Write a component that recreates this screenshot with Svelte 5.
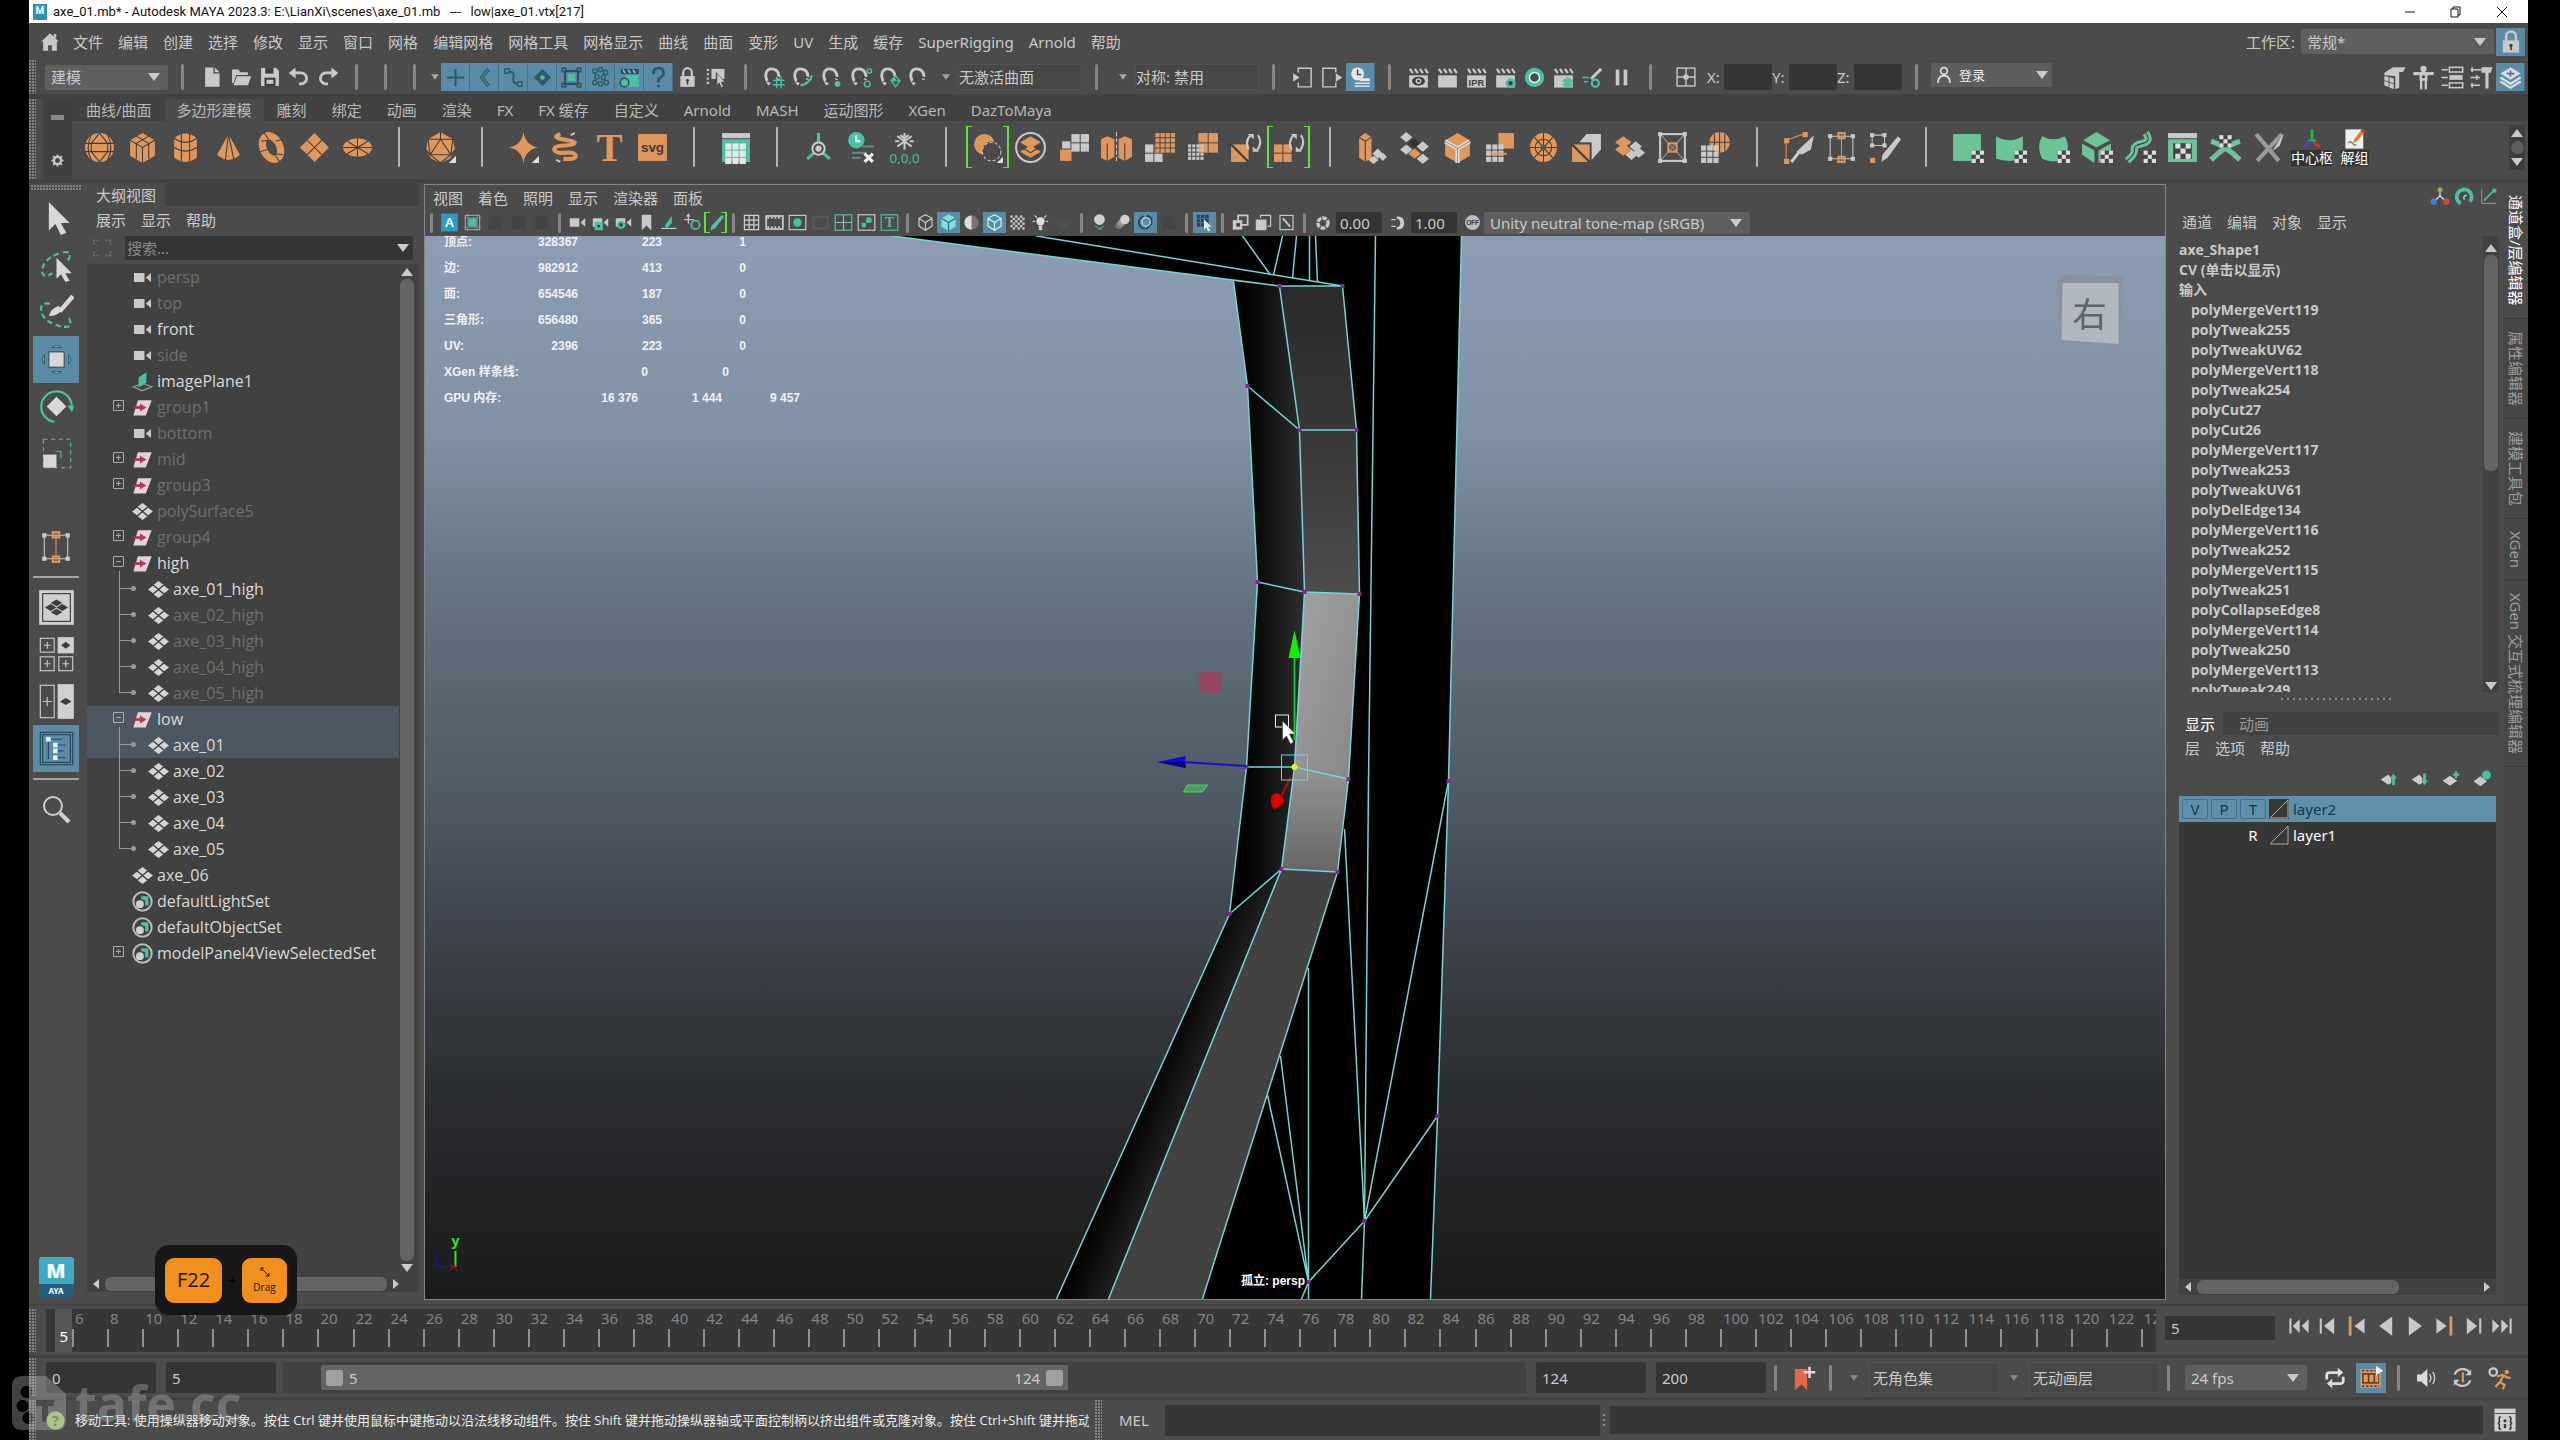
<script lang="ts">
  // Palette shared by the icon drawings
  const G = '#c9c9c9';
  const T = '#4cbfa6';
  const O = '#e0975c';
  const GR = '#6cc497';
  const D = '#3c3c3c';

  const rect = (x: number, y: number, w: number, h: number, fill: string) =>
    `<rect x="${x}" y="${y}" width="${w}" height="${h}" fill="${fill}"/>`;
  const box = (x: number, y: number, w: number, h: number, stroke: string, sw = 2) =>
    `<rect x="${x}" y="${y}" width="${w}" height="${h}" fill="none" stroke="${stroke}" stroke-width="${sw}"/>`;
  const fill = (d: string, c: string) => `<path d="${d}" fill="${c}"/>`;
  const line = (d: string, c: string, sw = 2, extra = '') =>
    `<path d="${d}" fill="none" stroke="${c}" stroke-width="${sw}" ${extra}/>`;
  const dot = (x: number, y: number, r: number, c: string) => `<circle cx="${x}" cy="${y}" r="${r}" fill="${c}"/>`;
  const ring = (x: number, y: number, r: number, c: string, sw = 2, extra = '') =>
    `<circle cx="${x}" cy="${y}" r="${r}" fill="none" stroke="${c}" stroke-width="${sw}" ${extra}/>`;
  const dia = (x: number, y: number, rx: number, ry: number, c: string) =>
    fill(`M${x} ${y - ry}l${rx} ${ry}l${-rx} ${ry}l${-rx} ${-ry}z`, c);
  const checker = (x: number, y: number, s: number) => {
    let out = rect(x, y, s * 3, s * 3, '#444');
    for (const [i, j] of [[0, 0], [2, 0], [1, 1], [0, 2], [2, 2]]) out += rect(x + i * s, y + j * s, s, s, '#ddd');
    return out;
  };
  const grid = (x: number, y: number, n: number, s: number, c: string) => {
    let out = '';
    for (let i = 0; i < n; i++) for (let j = 0; j < n; j++) out += rect(x + i * s, y + j * s, s - 1, s - 1, c);
    return out;
  };
  const clap =
    rect(3, 13, 26, 17, G) + line('M4 4l4 6M11 4l4 6M18 4l4 6M25 4l4 6', G, 3);
  const magnet = line('M9 26C0 14 4 4 12 4s12 7 9 15', G, 4) + line('M6 22l6-3M18 15l6 2', D, 2);
  const bigCube = (c: string, s = D) =>
    fill('M16 2l12 7v15l-12 7l-12-7v-15z', c) + line('M4 9l12 7l12-7M16 16v15M10 5l12 7v15M22 5l-12 7v15', s, 1);
  const cam = fill('M3 9h16v14h-16zM21 16l8-7v14z', G);
  const wireCube = line('M16 3l11 6v13l-11 7l-11-7v-13zM5 9l11 7l11-7M16 16v13', G, 2);
  const snow = line('M16 2v16M9 5l14 10M23 5l-14 10M12 4l4 3l4-3M7 10h4M25 10h-4', G, 2);
  const cycle = line('M19 18q-4-8 2-14M28 4q5 7-1 15', G, 2) + fill('M18 3h6v5zM29 20h-6v-5z', G);

  const icons: Record<string, string> = {
    home: fill('M16 2l14 13h-3v15h-8v-9h-6v9h-8v-15h-3zM22 3h4v6h-4z', G),
    file: fill('M6 2h12v9h9v19h-21z', G) + fill('M20 2l7 7h-7z', G),
    open: fill('M3 5h9l3 4h11v4h-17l-4 12h-2z', G) + fill('M10 15h21l-5 13h-21z', G),
    save: fill('M3 3h22l4 4v22h-26z', G) + rect(9, 3, 12, 8, D) + rect(8, 17, 16, 12, D) + rect(11, 20, 10, 6, G),
    undo: line('M7 10h12a8 8 0 0 1 0 16h-3', G, 4) + fill('M1 10l10-8v16z', G),
    redo: line('M25 10h-12a8 8 0 0 0 0 16h3', G, 4) + fill('M31 10l-10-8v16z', G),
    mHandle: line('M16 4v24M4 16h24', '#2f5a68', 3),
    mJoint: line('M22 4l-10 12l10 12', '#2f5a68', 5) + line('M22 4l-10 12l10 12', '#5fc0b0', 1),
    mCurve: box(4, 4, 6, 6, '#2f5a68') + line('M10 8c14 0-2 16 12 17', '#2f5a68', 3) + box(22, 22, 6, 6, '#2f5a68'),
    mSurf: dia(16, 10, 6, 6, '#2f5a68') + dia(16, 22, 6, 6, '#2f5a68') + dia(10, 16, 6, 6, '#2f5a68') + dia(22, 16, 6, 6, '#2f5a68') + dia(16, 16, 4, 4, T),
    mDeform: box(7, 7, 18, 18, '#2f4f5c', 3) + rect(11, 11, 10, 10, T) + box(3, 3, 5, 5, '#2f4f5c') + box(24, 3, 5, 5, '#2f4f5c') + box(3, 24, 5, 5, '#2f4f5c') + box(24, 24, 5, 5, '#2f4f5c'),
    mDyn: [[8, 7], [16, 5], [23, 9], [11, 15], [20, 16], [8, 23], [16, 25], [24, 23]].map(([x, y]) => ring(x, y, 3, '#2f5a68', 2)).join(''),
    mRender: rect(4, 4, 25, 7, '#2f4f5c') + line('M7 5l3 5M14 5l3 5M21 5l3 5', '#9cc', 2) + rect(10, 13, 19, 16, T) + dot(9, 23, 6, T) + ring(9, 23, 6, '#2f4f5c', 2),
    mMisc: line('M9 11q0-8 7-8t7 7q0 4-7 8v5', '#2f5a68', 4) + dot(16, 28, 2, '#2f5a68'),
    lock: line('M10 15v-6a6 6 0 0 1 12 0v6', G, 3) + rect(6, 14, 20, 15, G) + dot(16, 20, 2, D) + rect(15, 20, 2, 6, D),
    pick: line('M4 4v24', G, 3, 'stroke-dasharray="3 3"') + rect(9, 4, 18, 14, G) + fill('M15 8l14 15h-6l4 7l-4 1l-4-7l-4 4z', '#4b4b4b') + fill('M17 11l10 11h-5l3 7l-2 1l-3-7l-3 3z', G),
    magGrid: magnet + line('M14 20h16M14 26h16M19 15v16M25 15v16', T, 2),
    magCurve: magnet + line('M12 27q12-2 16-14', T, 3),
    magPoint: magnet + dot(23, 25, 4, T),
    magPlane: magnet + ring(24, 25, 4, T) + ring(27, 7, 3, T),
    magLive: magnet + line('M17 20l6-6l6 7l-6 8zM17 20l12 1', T, 2),
    magSurf: magnet,
    toIn: line('M10 9v-6h18v26h-18v-6', G, 2) + fill('M3 10l9 6l-9 6z', G),
    toOut: line('M22 9v-6h-18v26h18v-6', G, 2) + fill('M22 10l9 6l-9 6z', G),
    history: dot(12, 11, 9, '#e6e6e6') + line('M12 5v7h5', D, 2) + rect(15, 17, 14, 4, '#dfe8ec') + rect(8, 23, 21, 2, '#dfe8ec') + rect(8, 27, 21, 2, '#dfe8ec'),
    clapEye: clap + `<ellipse cx="16" cy="21" rx="9" ry="6" fill="${D}"/>` + dot(16, 21, 4, G) + dot(16, 21, 2, D),
    clap,
    clapIpa: clap + `<text x="5" y="28" font-family="Liberation Sans" font-weight="700" font-size="13" fill="${D}">IPR</text>`,
    clapGear: clap + dot(23, 24, 7, T) + dot(23, 24, 3, D),
    hyper: ring(16, 16, 10, T, 7) + ring(16, 16, 7, '#dff', 2),
    clapLayer: clap + dia(22, 21, 8, 6, T) + dia(22, 26, 8, 5, T),
    lightEd: line('M14 18L28 4', G, 4) + line('M2 16h9M4 22h6', T, 2) + ring(20, 24, 5, T, 3),
    pause: rect(8, 5, 5, 22, G) + rect(19, 5, 5, 22, G),
    grid4: box(3, 3, 26, 26, G) + line('M16 3v26M3 16h26', G, 2) + dot(16, 16, 4, G),
    modelKit: fill('M3 10l11-7h16l-3 6h-5v20l-5 2v-17l-14-1z', G) + fill('M3 14l12 3v14l-12-5z', G) + line('M3 20l12 4M9 15v14', D, 1),
    figure: dot(16, 5, 4, G) + line('M3 11h26', G, 4) + rect(11, 11, 10, 9, G) + line('M13 19v12M19 19v12', G, 3) + dot(16, 15, 2, D),
    sliders: line('M2 6h8M2 16h8M2 26h8', G, 2) + box(12, 3, 17, 6, G) + rect(12, 13, 17, 6, G) + box(12, 23, 17, 6, G),
    attrs: line('M2 6h14M2 16h12M2 26h12M4 3v6M10 13v6M4 23v6', G, 2) + fill('M16 3h14l-2 7h-3v20h-4v-20h-5z', G),
    layers: fill('M16 3l13 8l-13 8l-13-8z', '#d7dde0') + line('M3 16l13 8l13-8M3 21l13 8l13-8', '#d7dde0', 3) + line('M11 11h10M16 7v8', '#4a7088', 2),

    sphere: dot(16, 16, 14, O) + line('M2 12h28M2 20h28M8 4q-6 12 0 24M24 4q6 12 0 24M16 2l-8 10v8l8 10M16 2l8 10v8l-8 10', D, 1),
    cube: bigCube(O),
    cylinder: fill('M5 7q11-9 22 0v19q-11 8-22 0z', O) + line('M5 7q11 8 22 0M5 16q11 7 22 0M12 3v26M20 3v26', D, 1),
    cone: fill('M16 3l11 20q-11 10-22 0z', O) + line('M16 3l-3 25M16 3l5 24', D, 1),
    torus: `<ellipse cx="16" cy="16" rx="8" ry="12" fill="none" stroke="${O}" stroke-width="7" transform="rotate(-25 16 16)"/>` + line('M6 10l7-1M9 2l4 6M24 30l-4-6M27 23l-8-1M5 20l7-2M20 10l7-2', D, 1),
    plane: dia(16, 16, 14, 14, O) + line('M9 9l14 14M23 9l-14 14', D, 1),
    disc: `<ellipse cx="16" cy="16" rx="14" ry="9" fill="${O}"/>` + line('M2 16h28M16 7v18M6 10l20 12M26 10l-20 12', D, 1),
    platonic: fill('M16 1l12 7l2 10l-5 9l-9 4l-9-4l-5-9l2-10z', O) + line('M16 1v7M4 8l12 0l12 0M16 8l-10 15h20zM2 18l4 5l10 8l10-8l4-5M4 8l2 15M28 8l-2 15', D, 1) + fill('M31 24v7h-7z', '#ddd'),
    superShape: fill('M16 1q2 13 14 15q-12 2-14 15q-2-13-14-15q12-2 14-15z', O) + fill('M31 24v7h-7z', '#ddd'),
    helix: line('M10 3q-9 3 2 5t12 3q0 3-10 3t-10 4q2 4 11 3t10 3q0 4-12 3', O, 4) + line('M20 4l4-2M6 28l4 2', G, 2),
    type: `<text x="16" y="29" text-anchor="middle" font-family="Liberation Serif" font-weight="700" font-size="38" fill="${O}">T</text>`,
    svg: rect(2, 3, 28, 26, O) + `<text x="16" y="20" text-anchor="middle" font-family="Liberation Sans" font-weight="700" font-size="13" fill="${D}">svg</text>`,
    sweep: rect(3, 2, 27, 5, G) + rect(3, 8, 27, 22, T) + grid(6, 12, 3, 7, '#e8e8e8'),
    origin: line('M16 2v8M5 27l7-6M27 27l-7-6', T, 3) + ring(16, 17, 6, G, 2) + dot(16, 17, 3, G),
    delHist: dot(11, 9, 8, T) + line('M11 4v6h4', '#e0ffff', 2) + line('M17 15h11M7 21h14M7 26h8', '#5e8f88', 2) + line('M19 22l8 8M27 22l-8 8', '#eee', 3),
    freeze: snow + `<text x="16" y="31" text-anchor="middle" font-family="Noto Sans" font-size="13" fill="${T}">0,0,0</text>`,
    combine: dot(13, 13, 10, O) + dot(20, 19, 9, '#4b4b4b') + ring(20, 20, 9, G, 1, 'stroke-dasharray="3 2"') + fill('M31 25v6h-6z', '#ddd'),
    separate: ring(16, 16, 14, G, 2) + dia(16, 11, 10, 6, O) + dia(16, 20, 10, 6, O) + line('M6 15l10 6l10-6', D, 1),
    smooth: rect(3, 18, 11, 11, O) + grid(14, 3, 2, 9, G) + rect(5, 10, 8, 7, G),
    mirror: fill('M1 8l6-3l7 3v17l-7 4l-6-3z', O) + fill('M18 8l6-3l7 3v17l-7 4l-6-3z', O) + line('M7 12v17M24 12v17', D, 1) + line('M16 1v30', G, 1, 'stroke-dasharray="4 2"'),
    subdiv: grid(2, 13, 2, 9, G) + rect(11, 1, 20, 20, '#4b4b4b') + grid(12, 2, 4, 5, O),
    reduce: grid(12, 2, 2, 10, O) + grid(2, 13, 4, 4, G),
    triang: rect(2, 13, 17, 17, O) + line('M2 13l17 17', D, 2) + cycle,
    quadr: grid(2, 13, 2, 9, O) + cycle,
    extrude: fill('M4 6l6-4l6 4v20l-6 4l-6-4z', O) + line('M4 6l6 4l6-4M10 10v20', D, 1) + dia(22, 22, 5, 5, G) + dia(18, 28, 5, 4, G) + dia(27, 25, 4, 4, G),
    bridge: dia(8, 6, 6, 5, G) + dia(16, 12, 6, 5, '#333') + dia(24, 15, 6, 5, G) + dia(8, 18, 6, 5, G) + dia(16, 22, 6, 5, O) + dia(24, 27, 6, 5, G),
    bevel: fill('M16 2l12 7v15l-12 7l-12-7v-15z', O) + line('M4 10l12 7l12-7M16 17v14', '#ddd', 4) + line('M4 10l12 7l12-7M16 17v14', '#999', 1),
    append: rect(14, 2, 15, 15, O) + grid(2, 13, 3, 6, G) + line('M6 22h16', O, 2),
    fillHole: `<ellipse cx="16" cy="16" rx="13" ry="14" fill="${O}"/>` + line('M3 16h26M16 2v28M7 6l18 20M25 6l-18 20', D, 1) + ring(16, 16, 8, D, 1) + dot(16, 16, 3, '#555'),
    wedge: fill('M9 11l7-8h14v15l-9 10v-17z', G) + rect(2, 13, 17, 17, O) + line('M2 13l17 17', D, 2),
    flip: dia(10, 11, 8, 6, O) + dia(10, 18, 8, 6, O) + dia(22, 15, 6, 5, G) + dia(25, 21, 6, 5, G) + dia(18, 23, 6, 5, G),
    lattice: box(4, 3, 24, 26, G, 2) + line('M4 3l24 26M28 3l-24 26', '#999', 1) + box(12, 12, 8, 8, O) + grid(2, 1, 1, 5, G) + grid(26, 1, 1, 5, G) + grid(2, 27, 1, 5, G) + grid(26, 27, 1, 5, G),
    shrink: dot(20, 11, 10, O) + line('M10 11h20M20 1v20M15 3v16M25 3v16', D, 1) + grid(2, 14, 3, 6, G),
    multiCut: line('M4 30v-21l20-7', O, 1) + rect(2, 27, 5, 5, O) + rect(2, 7, 5, 5, O) + rect(20, 1, 5, 5, O) + fill('M31 4l-3 14l-9 5l-5-3z', G) + line('M17 20l-8 10', G, 3),
    quadDraw: line('M3 5h26M3 27h26M5 5v22M27 5v22', G, 1) + line('M16 3v26', O, 1) + box(13, 2, 6, 5, O) + box(13, 25, 6, 5, O) + rect(3, 3, 4, 4, G) + rect(25, 3, 4, 4, G) + rect(3, 25, 4, 4, G) + rect(25, 25, 4, 4, G),
    targetWeld: line('M4 4h12v10h-12z', G, 1) + rect(2, 2, 4, 4, G) + rect(14, 2, 4, 4, G) + rect(2, 12, 4, 4, G) + rect(14, 12, 4, 4, G) + rect(2, 26, 5, 5, O) + fill('M29 5l3 3l-13 18l-6 4l1-7z', G),
    uvSheet: rect(2, 3, 27, 26, GR) + checker(20, 19, 4),
    uvCyl: fill('M2 5q13 8 26 0v22q-13 4-26 0z', GR) + checker(20, 19, 4),
    uvSph: fill('M5 5q11 6 22 0q6 10 0 22q-11 5-22 0q-6-12 0-22z', GR) + checker(20, 19, 4),
    uvAuto: fill('M16 1l13 8l-13 7l-13-7z', GR) + fill('M2 12l12 7v12l-12-8zM30 12l-12 7v12l12-8z', GR) + checker(20, 19, 4),
    uvCont: line('M22 2q6 8-3 10t-8 6t-7 11', GR, 7) + line('M22 2q6 8-3 10t-8 6t-7 11', D, 1) + checker(20, 19, 4),
    uvEdit: rect(2, 2, 28, 5, G) + rect(2, 8, 28, 22, GR) + rect(7, 12, 18, 15, D) + checker(9, 12, 5),
    uv3d: line('M2 10q14 4 28 18M30 10q-14 4-28 18', GR, 5) + checker(10, 4, 4),
    uvCut: line('M4 3l22 26M29 3l-24 26', '#9a9a9a', 4) + fill('M31 2l-4 12l-8 6z', G),
    pivot: line('M16 20v-18', '#1fc04a', 4) + line('M16 18l11 10', '#c33', 4) + line('M16 18l-11 10', '#44c', 4) + line('M10 18h12', '#3a7', 2),
    notes: rect(2, 2, 26, 28, '#eee') + fill('M27 1l4 4l-12 14l-6 3l2-6z', '#d9822b') + fill('M27 1l4 4l-3 3l-4-4z', '#c33') + line('M6 22q3-4 6 0t6 2', '#777', 2),

    select: fill('M9 1l19 19h-8l5 9l-5 2l-5-10l-6 6z', '#d8d8d8'),
    lasso: line('M22 4q10-2 4 8M18 5q-16 6-15 18q3 5 9 0', T, 2, 'stroke-dasharray="5 3"') + fill('M16 9l14 14h-6l4 7l-4 1l-4-7l-4 4z', '#d8d8d8'),
    paint: line('M10 8q-9-2-8 6t10 12t14 3t1-9', T, 2, 'stroke-dasharray="5 3"') + line('M31 1l-12 14', '#d8d8d8', 4) + fill('M21 13l-3-3q-7 2-9 9q8 1 12-6z', '#d8d8d8'),
    move: rect(9, 9, 14, 14, '#d8d8d8') + box(9, 9, 14, 14, '#3c4c55', 1) + '<path d="M12 5q4-4 8 0zM12 27q4 4 8 0zM5 12q-4 4 0 8zM27 12q4 4 0 8z" fill="#6fb2bb" stroke="#2f6a80"/>',
    rotate: dia(16, 16, 9, 9, '#d8d8d8') + line('M14 30A14 14 0 1 1 30 15', T, 2) + fill('M26 15h7l-3 6z', T),
    scale: line('M4 3h25v26h-25z', T, 1, 'stroke-dasharray="4 3"') + rect(4, 17, 12, 12, '#d8d8d8') + line('M15 14h5v6', T, 1),
    panelOne: rect(1, 1, 30, 30, '#d0d0d0') + box(4, 4, 24, 24, D, 1) + dia(16, 12, 5, 3, D) + dia(16, 20, 5, 3, D) + dia(11, 16, 5, 3, D) + dia(21, 16, 5, 3, D),
    panelFour: box(2, 2, 12, 12, G, 1) + line('M8 5v6M5 8h6', G, 1) + rect(17, 1, 14, 14, '#d0d0d0') + dia(24, 8, 4, 3, D) + box(2, 18, 12, 12, G, 1) + line('M8 21v6M5 24h6', G, 1) + box(18, 18, 12, 12, G, 1) + line('M24 21v6M21 24h6', G, 1),
    panelTwo: box(2, 2, 12, 28, G, 1) + line('M8 12v8M4 16h8', G, 1) + rect(17, 1, 14, 30, '#d0d0d0') + dia(24, 16, 5, 3, D),
    outliner: box(2, 2, 28, 28, '#27465a', 1) + box(4, 4, 24, 24, '#27465a', 1) + line('M9 7v18M9 8h12M14 13h10M14 18h8M14 24h10', '#27465a', 1) + rect(7, 6, 4, 4, '#e4eef3') + rect(13, 11, 4, 4, '#e4eef3') + rect(13, 16, 4, 4, '#e4eef3') + rect(13, 22, 4, 4, '#e4eef3'),
    search: ring(13, 12, 9, '#d0d0d0', 2) + line('M20 19l9 9', '#d0d0d0', 4),

    cam,
    mesh: dia(16, 9, 8, 6, '#d4d4d4') + dia(16, 23, 8, 6, '#d4d4d4') + dia(8, 16, 8, 6, '#d4d4d4') + dia(24, 16, 8, 6, '#d4d4d4') + line('M8 9l16 14M24 9l-16 14', '#414141', 2),
    group: fill('M9 5h21l-9 23h-19z', '#e2d3d8') + line('M2 16h12', '#a03356', 4) + fill('M12 10l10 6l-10 6z', '#b03a60'),
    image: line('M2 24l14-5l14 5l-14 6z', '#8c9a98', 2) + fill('M10 10l12-8v16l-12 7z', T),
    set: ring(16, 16, 14, '#bcbcbc', 3) + dot(12, 20, 6, '#cfcfcf') + fill('M14 8h11v14h-5v-8l-6-2z', T),

    aBadge: rect(2, 1, 28, 30, '#2f9bc4') + `<text x="16" y="24" text-anchor="middle" font-family="Liberation Sans" font-weight="700" font-size="22" fill="#fff">A</text>`,
    selCam: box(4, 4, 24, 24, '#8aa') + rect(9, 9, 14, 14, T) + line('M1 8h30M1 24h30M8 1v30M24 1v30', '#8aa', 1),
    dim: rect(5, 5, 22, 22, '#444'),
    camLock: cam + rect(6, 15, 14, 14, T) + rect(11, 20, 4, 4, D),
    camGear: cam + dot(12, 20, 7, T) + dot(12, 20, 3, D),
    mark: fill('M8 3h16v26l-8-8l-8 8z', G),
    imgPlane: line('M2 26h26', G, 2) + fill('M8 22l12-17v12l-8 9z', T),
    pan2d: line('M9 4v14M2 11h16M6 6l3-4l3 4', G, 2) + ring(21, 20, 7, T, 3),
    pencil: fill('M27 3l3 4l-15 19l-8 4l2-8z', T),
    gridI: line('M3 4h26M3 12h26M3 20h26M3 28h26M4 3v26M12 3v26M20 3v26M28 3v26', '#d0d0d0', 2),
    filmGate: box(2, 5, 28, 22, G, 3) + line('M4 8h24M4 24h24', G, 3, 'stroke-dasharray="3 3"'),
    resGate: box(2, 4, 28, 24, G, 2) + dot(16, 16, 7, T),
    gateMask: box(4, 6, 24, 20, '#5a5a5a', 3),
    field: box(2, 3, 28, 26, T, 2) + line('M2 16h28M16 3v26', '#9bb', 2),
    safeAct: box(2, 3, 28, 26, G, 2) + dot(20, 12, 5, T) + rect(8, 17, 7, 7, T),
    safeTitle: box(2, 3, 28, 26, T, 2) + `<text x="16" y="24" text-anchor="middle" font-family="Liberation Serif" font-weight="700" font-size="23" fill="${T}">T</text>`,
    wireCube,
    shadeCube: fill('M16 2l12 7v14l-12 7l-12-7v-14z', '#7fe0d8') + line('M4 9l12 7l12-7M16 16v14', '#2f6a80', 2),
    halfBall: dot(16, 16, 12, '#777') + fill('M16 4a12 12 0 0 0 0 24z', '#ddd'),
    texCube: wireCube.replaceAll(G, '#bfe'),
    checkBall: [4, 12, 20].map((y) => [4, 12, 20].map((x) => rect(x, y, 4, 4, G) + rect(x + 4, y + 4, 4, 4, G)).join('')).join(''),
    bulb: dot(16, 14, 7, '#ddd') + rect(13, 21, 6, 8, G) + line('M3 14h4M25 14h4M6 4l4 4M26 4l-4 4', G, 2),
    shadow: `<ellipse cx="16" cy="20" rx="11" ry="6" fill="#475451"/>`,
    ao: dot(16, 11, 9, '#d0d0d0') + line('M8 22l8 4l8-4M13 27h8', '#4f9c8a', 2),
    motion: dot(10, 21, 6, '#777') + dot(14, 17, 6, '#999') + dot(20, 11, 8, '#d0d0d0'),
    aa: line('M13 5q-9 4-8 12t10 10M18 4l8 5v9l-9 9', '#27465a', 3) + ring(17, 15, 7, '#cde', 2),
    isolate: grid(3, 3, 3, 7, '#27465a') + fill('M15 11l13 12h-6l4 7l-4 1l-3-7l-4 4z', '#e8e8e8'),
    copyA: rect(3, 12, 16, 16, G) + box(12, 4, 16, 16, G, 3) + rect(9, 17, 6, 6, D),
    copyB: rect(3, 11, 18, 18, G) + line('M11 8v-4h17v18h-5', G, 2),
    slash: box(5, 4, 22, 24, G, 2) + line('M10 9l12 14', G, 3),
    aperture: ring(16, 16, 9, G, 6, 'stroke-dasharray="8 2"'),
    contrast: line('M4 10h8M4 22h8', G, 2) + fill('M14 4q13 0 13 12t-13 12v-5q6 0 6-7t-6-7z', G),
    off: dot(16, 16, 14, '#bdbdbd') + `<text x="16" y="20" text-anchor="middle" font-family="Liberation Sans" font-weight="700" font-size="12" fill="#333">OFF</text>`,

    axes3: line('M16 16v-8M16 16l-9 8M16 16l9 8', '#ddd', 2) + dot(16, 6, 4, '#9aa54a') + dot(6, 25, 5, '#4a7fd6') + dot(26, 25, 5, '#cc4a4a'),
    swirl: line('M9 28a12 12 0 1 1 15-3', T, 6) + line('M15 22q-3-7 4-7', '#9fe', 2),
    graph: line('M3 3v26h26', '#7c8f8b', 2) + line('M7 24l18-18', T, 3) + rect(22, 3, 7, 7, T),
    layUp: fill('M1 17l14-9l5 6v9l-5 3z', '#d0c8cc') + line('M24 27v-14', T, 5) + fill('M18 15l6-9l6 9z', T),
    layDown: fill('M1 17l14-9l5 6v9l-5 3z', '#d0c8cc') + line('M24 6v14', T, 5) + fill('M18 18l6 9l6-9z', T),
    layNew: dia(14, 19, 13, 9, '#d0c8cc') + line('M25 2v12M19 8h12', T, 4),
    layAssign: dia(13, 20, 12, 9, '#d0c8cc') + dot(24, 9, 8, T),

    start: rect(2, 5, 3, 22, G) + fill('M17 6v20l-10-10zM30 6v20l-10-10z', G),
    prevKey: rect(4, 5, 3, 22, G) + fill('M25 4v24l-15-12z', G),
    prevCurve: rect(4, 2, 4, 28, O) + fill('M27 5v22l-15-11z', G),
    playBack: fill('M25 2v28l-19-14z', G),
    play: fill('M7 2v28l19-14z', G),
    nextCurve: rect(24, 2, 4, 28, O) + fill('M5 5v22l15-11z', G),
    nextKey: rect(25, 5, 3, 22, G) + fill('M7 4v24l15-12z', G),
    end: rect(27, 5, 3, 22, G) + fill('M2 6v20l10-10zM15 6v20l10-10z', G),
    bookmark: fill('M6 5h15v26l-7-7l-8 7z', '#e5674a') + line('M24 2v14M17 9h14', '#ddd', 3),
    loop: line('M4 18v-6q0-4 4-4h14M28 14v6q0 4-4 4h-14', '#ddd', 4) + fill('M20 1l8 7l-8 7zM12 17l-8 7l8 7z', '#ddd'),
    film: rect(3, 5, 25, 23, O) + rect(5, 10, 21, 13, '#5e3b2c') + line('M5 7h21M5 26h21', '#5e3b2c', 2, 'stroke-dasharray="3 2"') + rect(7, 12, 5, 9, O) + rect(14, 12, 5, 9, O) + rect(21, 12, 4, 9, O) + fill('M22 1l9 6l-9 6z', '#eee'),
    speaker: fill('M3 11h6l9-8v26l-9-8h-6z', '#ddd') + line('M21 10q4 6 0 12M26 7q5 9 0 18', G, 2),
    cache: line('M5 12a12 12 0 0 1 22-1M27 20a12 12 0 0 1-22 1', G, 3) + rect(15, 9, 3, 14, O) + fill('M28 5v8h-8zM4 27v-8h8z', G),
    runner: ring(7, 8, 5, G, 3) + dot(25, 8, 3, O) + line('M12 14l7-2l6 3l5 1M20 14l-4 8l6 3l-2 6M15 22l-5 6', O, 3),
    script: rect(3, 2, 26, 28, '#d0d0d0') + line('M3 8h26', D, 1) + line('M11 12q-3 0-2 4t-2 4q3 0 2 4t2 3M21 12q3 0 2 4t2 4q-3 0-2 4t-2 3', D, 2) + dot(16, 17, 2, D) + line('M16 21v5', D, 3),
    gear: ring(16, 16, 9, G, 6) + line('M16 1v5M16 26v5M1 16h5M26 16h5M5 5l4 4M27 5l-4 4M5 27l4-4M27 27l-4-4', G, 4),
    filter: line('M4 11v-6h7M21 5h7v6M28 21v6h-7M11 27h-7v-6', '#6c6c6c', 3, 'stroke-dasharray="3 2"'),
    question: dot(16, 16, 14, '#a4c66a') + `<text x="16" y="24" text-anchor="middle" font-family="Noto Sans" font-weight="700" font-size="22" fill="#5f6e45">?</text>`,
    user: ring(16, 9, 6, '#ddd', 3) + line('M5 30q1-13 11-13t11 13', '#ddd', 3)
  };
  icons.reshape = icons.quadDraw;

  const menus = ['文件', '编辑', '创建', '选择', '修改', '显示', '窗口', '网格', '编辑网格', '网格工具', '网格显示', '曲线', '曲面', '变形', 'UV', '生成', '缓存', 'SuperRigging', 'Arnold', '帮助'];
  const shelfTabs = ['曲线/曲面', '多边形建模', '雕刻', '绑定', '动画', '渲染', 'FX', 'FX 缓存', '自定义', 'Arnold', 'MASH', '运动图形', 'XGen', 'DazToMaya'];

  // '|' is a separator, '*' marks an active button, '[' a bracketed one
  const statusA = '| file open save undo redo | | |'.split(' ');
  const statusB = '*mHandle *mJoint *mCurve *mSurf *mDeform *mDyn *mRender *mMisc lock pick | magGrid magCurve magPoint magPlane magLive magSurf'.split(' ');
  const statusC = '| toIn toOut *history | clapEye clap clapIpa clapGear hyper clapLayer lightEd pause |'.split(' ');
  const statusD = 'modelKit figure sliders attrs *layers'.split(' ');
  const shelf = 'sphere cube cylinder cone torus plane disc | platonic | superShape helix type svg | sweep | origin delHist freeze | [combine separate smooth mirror subdiv reduce triang [quadr | extrude bridge bevel append fillHole wedge flip lattice shrink | multiCut quadDraw targetWeld | uvSheet uvCyl uvSph uvAuto uvCont uvEdit uv3d uvCut'.split(' ');
  const viewBar = '| aBadge selCam dim dim dim | cam camLock camGear mark imgPlane pan2d [pencil | gridI filmGate resGate gateMask field safeAct safeTitle | wireCube *shadeCube halfBall *texCube checkBall bulb shadow | ao motion *aa dim | *isolate | copyA copyB slash |'.split(' ');
  const tools = ['select', 'lasso', 'paint', '*move', 'rotate', 'scale'];
  const panels = ['panelOne', 'panelFour', 'panelTwo', '*outliner'];

  type Node = { name: string; icon: string; dim?: boolean; exp?: string; child?: boolean; sel?: boolean };
  const tree: Node[] = [
    { name: 'persp', icon: 'cam', dim: true },
    { name: 'top', icon: 'cam', dim: true },
    { name: 'front', icon: 'cam' },
    { name: 'side', icon: 'cam', dim: true },
    { name: 'imagePlane1', icon: 'image' },
    { name: 'group1', icon: 'group', dim: true, exp: '+' },
    { name: 'bottom', icon: 'cam', dim: true },
    { name: 'mid', icon: 'group', dim: true, exp: '+' },
    { name: 'group3', icon: 'group', dim: true, exp: '+' },
    { name: 'polySurface5', icon: 'mesh', dim: true },
    { name: 'group4', icon: 'group', dim: true, exp: '+' },
    { name: 'high', icon: 'group', exp: '-' },
    { name: 'axe_01_high', icon: 'mesh', child: true },
    { name: 'axe_02_high', icon: 'mesh', child: true, dim: true },
    { name: 'axe_03_high', icon: 'mesh', child: true, dim: true },
    { name: 'axe_04_high', icon: 'mesh', child: true, dim: true },
    { name: 'axe_05_high', icon: 'mesh', child: true, dim: true },
    { name: 'low', icon: 'group', exp: '-', sel: true },
    { name: 'axe_01', icon: 'mesh', child: true, sel: true },
    { name: 'axe_02', icon: 'mesh', child: true },
    { name: 'axe_03', icon: 'mesh', child: true },
    { name: 'axe_04', icon: 'mesh', child: true },
    { name: 'axe_05', icon: 'mesh', child: true },
    { name: 'axe_06', icon: 'mesh' },
    { name: 'defaultLightSet', icon: 'set' },
    { name: 'defaultObjectSet', icon: 'set' },
    { name: 'modelPanel4ViewSelectedSet', icon: 'set', exp: '+' }
  ];

  const hud = [
    ['顶点:', '328367', '223', '1'],
    ['边:', '982912', '413', '0'],
    ['面:', '654546', '187', '0'],
    ['三角形:', '656480', '365', '0'],
    ['UV:', '2396', '223', '0']
  ];
  const hudWide = [
    ['XGen 样条线:', '0', '0', ''],
    ['GPU 内存:', '16 376', '1 444', '9 457']
  ];

  const inputs = ['polyMergeVert119', 'polyTweak255', 'polyTweakUV62', 'polyMergeVert118', 'polyTweak254', 'polyCut27', 'polyCut26', 'polyMergeVert117', 'polyTweak253', 'polyTweakUV61', 'polyDelEdge134', 'polyMergeVert116', 'polyTweak252', 'polyMergeVert115', 'polyTweak251', 'polyCollapseEdge8', 'polyMergeVert114', 'polyTweak250', 'polyMergeVert113', 'polyTweak249'];
  const sideTabs = ['通道盒/层编辑器', '属性编辑器', '建模工具包', 'XGen', 'XGen 交互式梳理编辑器'];
  const frames = Array.from({ length: 60 }, (_, i) => 6 + i * 2);

  // Wireframe of the axe, in window coordinates
  const edges = [
    'M893 236L1280 286H1343L1037 236',
    'M1234 281L1248 386L1258 582L1247 767L1230 914L1057 1299',
    'M1280 286L1300 430L1305 592L1295 767L1282 869L1109 1299',
    'M1343 286L1357 430L1360 594L1349 779L1338 872L1203 1299',
    'M1248 386L1300 430H1357M1258 582L1305 592L1360 594M1247 767H1295L1349 779M1230 914L1282 869L1338 872',
    'M1376 236L1369 780L1365 1221L1362 1299M1462 236L1449 781L1438 1116L1431 1299',
    'M1449 781L1365 1221L1438 1116M1365 1221L1309 1282L1302 1299M1345 829L1365 1221',
    'M1309 968V1299M1281 1056L1309 1282L1268 1095',
    'M1243 236L1271 275M1283 236L1274 275M1297 236L1293 278M1310 236V280M1316 236L1318 282'
  ];
  const verts = [[1280, 286], [1343, 286], [1248, 386], [1300, 430], [1357, 430], [1258, 582], [1305, 592], [1360, 594], [1247, 767], [1349, 779], [1230, 914], [1282, 869], [1338, 872], [1449, 781], [1438, 1116], [1365, 1221], [1309, 1282]];

  let search = $state('');
  let current = $state('5');
</script>

{#snippet icon(name: string, size: number)}
  <svg class="icon" width={size} height={size} viewBox="0 0 32 32" aria-hidden="true">{@html icons[name]}</svg>
{/snippet}

{#snippet bar(items: string[], size: number)}
  {#each items as item}
    {#if item === '|'}
      <span class="sep"></span>
    {:else}
      {@const name = item.replace(/^[*[]/, '')}
      <button class="slot" class:active={item[0] === '*'} class:bracket={item[0] === '['} aria-label={name}>
        {@render icon(name, size)}
      </button>
    {/if}
  {/each}
{/snippet}

{#snippet caret(dir: string)}
  <svg class="caret" width="12" height="8" viewBox="0 0 12 8" aria-hidden="true"><path d={dir === 'up' ? 'M0 8l6-8l6 8z' : 'M0 0h12l-6 8z'} /></svg>
{/snippet}

{#snippet hbar(cls: string)}
  <div class="hscroll">
    <svg width="6" height="10" viewBox="0 0 6 10"><path d="M6 0v10l-6-5z" /></svg>
    <div class="htrack"><div class="hthumb {cls}"></div></div>
    <svg width="6" height="10" viewBox="0 0 6 10"><path d="M0 0v10l6-5z" /></svg>
  </div>
{/snippet}

<div class="app">
  <header class="titlebar">
    <span class="logo-s">M</span>
    <span class="title">axe_01.mb* - Autodesk MAYA 2023.3: E:\LianXi\scenes\axe_01.mb &nbsp; --- &nbsp; low|axe_01.vtx[217]</span>
    <button aria-label="Minimize"><svg width="12" height="12"><path d="M1 6h10" /></svg></button>
    <button aria-label="Restore"><svg width="12" height="12"><path d="M1 3h7v8h-7zM3 3v-2h7v8h-2" /></svg></button>
    <button aria-label="Close"><svg width="12" height="12"><path d="M1 1l10 10M11 1l-10 10" /></svg></button>
  </header>

  <nav class="menubar">
    {@render icon('home', 20)}
    <div class="menus">
      {#each menus as m}<button>{m}</button>{/each}
    </div>
    <label for="workspace">工作区:</label>
    <span class="drop drop--work">
      <select id="workspace"><option>常规*</option></select>{@render caret('down')}
    </span>
    <button class="slot active" aria-label="Lock workspace">{@render icon('lock', 26)}</button>
  </nav>

  <div class="status">
    <span class="grip"></span>
    <span class="drop drop--mode">
      <select aria-label="Menu set"><option>建模</option></select>{@render caret('down')}
    </span>
    {@render bar(statusA, 22)}
    <span class="mini">{@render caret('down')}</span>
    {@render bar(statusB, 23)}
    <span class="mini mini--wide">{@render caret('down')}</span>
    <button class="flat">无激活曲面</button>
    <span class="sep"></span>
    <span class="mini mini--wide">{@render caret('down')}</span>
    <button class="flat">对称: 禁用</button>
    {@render bar(statusC, 23)}
    <span class="gridicon">{@render icon('grid4', 22)}</span>
    {#each ['X', 'Y', 'Z'] as axis}
      <label class="coord">{axis}:<input type="text" /></label>
    {/each}
    <span class="sep"></span>
    <button class="login">{@render icon('user', 18)}<span>登录</span>{@render caret('down')}</button>
    <div class="push"></div>
    {@render bar(statusD, 25)}
  </div>

  <div class="shelf">
    <span class="grip"></span>
    <div class="shelf-side"><i></i>{@render icon('gear', 13)}</div>
    <div class="shelf-main">
      <div class="shelf-tabs">
        {#each shelfTabs as tab, i}<button class:on={i === 1}>{tab}</button>{/each}
      </div>
      <div class="shelf-icons">
        {@render bar(shelf, 33)}
        <button class="slot named" aria-label="中心枢轴">{@render icon('pivot', 22)}<span>中心枢轴</span></button>
        <button class="slot named" aria-label="解组">{@render icon('notes', 22)}<span>解组</span></button>
        <div class="shelf-scroll">{@render caret('up')}<i></i>{@render caret('down')}</div>
      </div>
    </div>
  </div>

  <main class="work">
    <aside class="toolbox">
      <span class="grip-h"></span>
      {#each tools as t}
        <button class="tool" class:active={t[0] === '*'} aria-label={t}>{@render icon(t.replace('*', ''), 35)}</button>
      {/each}
      <button class="tool tool--last" aria-label="reshape">{@render icon('reshape', 34)}</button>
      <hr />
      {#each panels as p}
        <button class="tool" class:active={p[0] === '*'} aria-label={p}>{@render icon(p.replace('*', ''), 37)}</button>
      {/each}
      <hr />
      <button class="tool" aria-label="search">{@render icon('search', 32)}</button>
      <div class="maya"><b>M</b><small>AYA</small></div>
    </aside>

    <section class="outliner">
      <div class="tabstrip"><button class="on">大纲视图</button></div>
      <div class="menus"><button>展示</button><button>显示</button><button>帮助</button></div>
      <div class="search">
        {@render icon('filter', 22)}
        <div class="search-box"><input type="text" placeholder="搜索..." aria-label="搜索" bind:value={search} />{@render caret('down')}</div>
      </div>
      <div class="tree-wrap">
        <ul class="tree">
          {#each tree as n}
            <li class:sel={n.sel} class:dim={n.dim} class:child={n.child}>
              <span class="exp">
                {#if n.exp}<svg width="11" height="11" viewBox="0 0 11 11"><path d={n.exp === '+' ? 'M.5.5h10v10h-10zM3 5.500h5M5.500 3v5' : 'M.5.5h10v10h-10zM3 5.500h5'} /></svg>{/if}
              </span>
              {@render icon(n.icon, 21)}
              <span>{n.name}</span>
            </li>
          {/each}
        </ul>
        <div class="vscroll">{@render caret('up')}<div class="vtrack"><div class="vthumb"></div></div>{@render caret('down')}</div>
      </div>
      {@render hbar('hthumb--full')}
    </section>

    <section class="viewport">
      <div class="menus">
        {#each ['视图', '着色', '照明', '显示', '渲染器', '面板'] as m}<button>{m}</button>{/each}
      </div>
      <div class="viewbar">
        {@render bar(viewBar, 19)}
        <button class="slot" aria-label="exposure">{@render icon('aperture', 18)}</button>
        <input type="text" value="0.00" aria-label="Exposure" />
        <button class="slot" aria-label="contrast">{@render icon('contrast', 18)}</button>
        <input type="text" value="1.00" aria-label="Gamma" />
        <button class="slot" aria-label="view transform">{@render icon('off', 17)}</button>
        <span class="drop drop--tone">
          <select aria-label="View transform"><option>Unity neutral tone-map (sRGB)</option></select>{@render caret('down')}
        </span>
      </div>
      <div class="canvas">
        <svg class="scene" viewBox="425 236 1741 1063" preserveAspectRatio="xMidYMid slice" aria-label="persp">
          <defs>
            <linearGradient id="strip" x1="0" x2="1" y1="0" y2="0"><stop offset="0.200" stop-color="#000" /><stop offset="1" stop-color="#2e2e2e" /></linearGradient>
            <linearGradient id="low" gradientUnits="userSpaceOnUse" x1="1130" y1="1120" x2="1185" y2="1142"><stop offset="0" stop-color="#000" /><stop offset="1" stop-color="#272727" /></linearGradient>
            <linearGradient id="f1" x1="0" x2="0" y1="0" y2="1"><stop offset="0" stop-color="#292929" /><stop offset="1" stop-color="#383838" /></linearGradient>
            <linearGradient id="f2" x1="0" x2="0" y1="0" y2="1"><stop offset="0" stop-color="#373737" /><stop offset="1" stop-color="#4d4d4d" /></linearGradient>
            <linearGradient id="f3" x1="0" x2="1" y1="0" y2="1"><stop offset="0" stop-color="#a3a3a3" /><stop offset="1" stop-color="#858585" /></linearGradient>
            <linearGradient id="f4" x1="0" x2="0" y1="0" y2="1"><stop offset="0" stop-color="#949494" /><stop offset="1" stop-color="#666" /></linearGradient>
          </defs>
          <path d="M893 236L1280 286H1343L1357 430L1360 594L1349 779L1338 872L1203 1299H1431L1438 1116L1449 781L1462 236z" />
          <path fill="url(#strip)" d="M1234 281L1280 286L1300 430L1305 592L1295 767L1282 869L1230 914L1247 767L1258 582L1248 386z" />
          <path fill="url(#low)" d="M1230 914L1282 869L1109 1299H1057z" />
          <path fill="url(#f1)" d="M1280 286H1343L1357 430H1300z" />
          <path fill="url(#f2)" d="M1300 430H1357L1360 594L1305 592z" />
          <path fill="url(#f3)" d="M1305 592L1360 594L1349 779L1295 767z" />
          <path fill="url(#f4)" d="M1295 767L1349 779L1338 872L1282 869z" />
          <path fill="#424242" d="M1282 869L1338 872L1203 1299H1109z" />
          {#each edges as d}<path class="edge" {d} />{/each}
          {#each verts as [x, y]}<rect x={x - 2} y={y - 2} width="4" height="4" fill="#8b1f96" />{/each}

          <!-- move manipulator -->
          <path d="M1295 740V655" stroke="#10c810" stroke-width="2" />
          <path d="M1295 630L1301 658H1289z" fill="#0cf00c" />
          <path d="M1247 766L1184 762" stroke="#1414c8" stroke-width="2" />
          <path d="M1158 762L1186 756V768z" fill="#0a0ae6" />
          <path d="M1158 762L1186 762V768z" fill="#050580" />
          <path d="M1291 777L1282 796" stroke="#b01010" stroke-width="2" />
          <path d="M1272 796Q1277 791 1281 795L1285 800Q1284 806 1275 809Q1270 806 1272 796z" fill="#dc0000" />
          <rect x="1200" y="673" width="22" height="19" fill="#a0405e" fill-opacity="0.800" stroke="#c0304e" />
          <path d="M1184 792L1188 785H1208L1203 792z" fill="#4f9a62" stroke="#3fe04f" />
          <rect x="1282" y="755" width="26" height="25" fill="none" stroke="#6ad4dc" />
          <circle cx="1295" cy="767" r="3" fill="#f0f020" />
          <rect x="1276" y="715" width="13" height="12" fill="none" stroke="#eee" />
          <path d="M1283 721V740L1287 736L1291 744L1294 742L1290 734H1296z" fill="#fff" stroke="#333" stroke-width="0.500" />

          <!-- view cube -->
          <path d="M2057 281L2064 274L2123 277L2120 346L2060 342z" fill="#8a929c" />
          <path d="M2063 283H2119V344L2062 340z" fill="#b0b7be" />
          <text class="cube-text" x="2090" y="327">右</text>

          <!-- world axis -->
          <path d="M456 1251V1267" stroke="#2ee82e" stroke-width="2" />
          <path d="M454 1267H437V1256" stroke="#1a1a9a" fill="none" />
          <path d="M450 1264L458 1271M450 1271L458 1264" stroke="#b01828" />
          <text x="452" y="1246" class="axis-text">y</text>
        </svg>
        <div class="hud">
          {#each hud as row}
            <div class="hud-row">{#each row as c}<span>{c}</span>{/each}</div>
          {/each}
          {#each hudWide as row}
            <div class="hud-row hud-row--wide">{#each row as c}<span>{c}</span>{/each}</div>
          {/each}
        </div>
        <div class="cam-name">孤立: persp</div>
      </div>
    </section>

    <section class="channels">
      <div class="chan-tools">{@render icon('axes3', 20)}{@render icon('swirl', 20)}{@render icon('graph', 18)}</div>
      <div class="menus"><button>通道</button><button>编辑</button><button>对象</button><button>显示</button></div>
      <div class="chan-body">
        <div class="chan-list">
          <p>axe_Shape1</p>
          <p>CV (单击以显示)</p>
          <p>输入</p>
          {#each inputs as n}<p class="in">{n}</p>{/each}
        </div>
        <div class="vscroll vscroll--chan">{@render caret('up')}<div class="vtrack"><div class="vthumb vthumb--short"></div></div>{@render caret('down')}</div>
      </div>
      <div class="dots"></div>
      <div class="layer-panel">
        <div class="tabstrip"><button class="on bright">显示</button><button>动画</button></div>
        <div class="menus"><button>层</button><button>选项</button><button>帮助</button></div>
        <div class="layer-tools">
          {#each ['layUp', 'layDown', 'layNew', 'layAssign'] as n}<button aria-label={n}>{@render icon(n, 18)}</button>{/each}
        </div>
        <div class="layers">
          <div class="layer on"><b>V</b><b>P</b><b>T</b>
            <svg width="20" height="20"><rect width="20" height="20" fill="#383838" /><path d="M1 19L19 1V19z" fill="none" stroke="#aaa" /></svg><span>layer2</span></div>
          <div class="layer"><b></b><b></b><b>R</b>
            <svg width="20" height="20"><path d="M1 19L19 1V19z" fill="none" stroke="#aaa" /></svg><span>layer1</span></div>
          <div class="push"></div>
          {@render hbar('')}
        </div>
      </div>
    </section>

    <nav class="sidetabs">
      {#each sideTabs as tab, i}<button class:on={i === 0}>{tab}</button>{/each}
    </nav>
  </main>

  <div class="timeline">
    <span class="grip"></span>
    <div class="ruler">
      <div class="now">5</div>
      <div class="ticks">
        {#each frames as f}<div class="tick">{f}</div>{/each}
      </div>
    </div>
    <input class="frame" type="text" bind:value={current} aria-label="Current frame" />
    <div class="play">
      {#each ['start', 'prevKey', 'prevCurve', 'playBack', 'play', 'nextCurve', 'nextKey', 'end'] as n}
        <button aria-label={n}>{@render icon(n, 22)}</button>
      {/each}
    </div>
  </div>

  <div class="range">
    <span class="grip"></span>
    <input type="text" value="0" aria-label="Animation start" />
    <input type="text" value="5" aria-label="Playback start" />
    <div class="slider">
      <div class="slider-bar"><i></i><span>5</span><span class="end">124</span><i></i></div>
    </div>
    <input type="text" value="124" aria-label="Playback end" />
    <input class="last" type="text" value="200" aria-label="Animation end" />
    <span class="sep sep--thin"></span>
    <button class="slot" aria-label="bookmark">{@render icon('bookmark', 26)}</button>
    <span class="sep sep--thin"></span>
    <span class="mini mini--dim">{@render caret('down')}</span>
    <button class="flat">无角色集</button>
    <span class="mini mini--dim">{@render caret('down')}</span>
    <button class="flat">无动画层</button>
    <span class="sep sep--thin"></span>
    <span class="drop drop--fps">
      <select aria-label="Frame rate"><option>24 fps</option></select>{@render caret('down')}
    </span>
    <button class="slot" aria-label="loop">{@render icon('loop', 22)}</button>
    <button class="slot active" aria-label="cached playback">{@render icon('film', 26)}</button>
    <span class="sep sep--thin"></span>
    <button class="slot" aria-label="speaker">{@render icon('speaker', 22)}</button>
    <button class="slot" aria-label="auto key">{@render icon('cache', 23)}</button>
    <button class="slot" aria-label="preferences">{@render icon('runner', 24)}</button>
  </div>

  <footer class="command">
    <span class="grip"></span>
    {@render icon('question', 21)}
    <div class="help">移动工具: 使用操纵器移动对象。按住 Ctrl 键并使用鼠标中键拖动以沿法线移动组件。按住 Shift 键并拖动操纵器轴或平面控制柄以挤出组件或克隆对象。按住 Ctrl+Shift 键并拖动操纵器</div>
    <span class="grip"></span>
    <label for="mel">MEL</label>
    <input id="mel" type="text" />
    <span class="split"></span>
    <output></output>
    <button class="slot" aria-label="Script editor">{@render icon('script', 26)}</button>
  </footer>

  <div class="keys"><kbd>F22</kbd><span>+</span><kbd class="small"><svg width="10" height="10"><path d="M1 1l8 8M1 4V1h3M9 6v3h-3" /></svg>Drag</kbd></div>

  <div class="watermark">
    <svg width="54" height="54" viewBox="0 0 54 54"><path fill-rule="evenodd" d="M10 0H34L54 18V44Q54 54 44 54H10Q0 54 0 44V10Q0 0 10 0zM14 10a6 6 0 1 0 1 0zM10 24a6 6 0 1 0 1 0zM16 36a6 6 0 1 0 1 0zM24 24H42V30H36V46H30V30H24z" /></svg>
    <span>tafe.cc</span>
  </div>
</div>

<style>
  :global(body) {
    background: #000;
  }

  .app {
    position: relative;
    box-sizing: border-box;
    display: flex;
    flex-direction: column;
    height: 100vh;
    margin: 0 32px 0 29px;
    background: #4b4b4b;
    color: #cacaca;
    font-family: 'Noto Sans', 'Noto Sans CJK SC', sans-serif;
    font-size: 15px;
    line-height: 20px;
    overflow: hidden;
  }

  button,
  input,
  select {
    box-sizing: border-box;
    margin: 0;
    padding: 0;
    border: 0;
    border-radius: 0;
    background: none;
    color: inherit;
    font: inherit;
    white-space: nowrap;
  }

  input {
    background: #343434;
    padding-left: 6px;
    border-radius: 2px;
    min-width: 0;
  }

  .icon {
    display: block;
    flex: none;
  }

  .caret {
    fill: #cacaca;
    flex: none;
  }

  .push {
    flex: 1;
  }

  .menus {
    display: flex;
    gap: 15px;
    flex: none;
  }

  /* Grips and separators */
  .grip {
    align-self: stretch;
    flex: none;
    width: 7px;
    margin-right: 9px;
    background: radial-gradient(circle at 1px 1px, #858585 1px, transparent 1px) 0 0 / 3px 3px;
  }

  .sep {
    display: flex;
    justify-content: center;
    align-items: center;
    flex: none;
    width: 29px;
    height: 26px;
  }

  .sep::before {
    content: '';
    width: 3px;
    height: 100%;
    border-radius: 2px;
    background: #858585;
  }

  .slot {
    display: flex;
    align-items: center;
    justify-content: center;
    flex: none;
    width: 29px;
    height: 28px;
  }

  .active {
    background: #5b8ba7;
  }

  .status .active {
    border-right: 1px solid #4a7088;
  }

  /* Square brackets round the button: two sides and four short ends */
  .bracket {
    border: solid #5fe03c;
    border-width: 0 2px;
    background:
      linear-gradient(#5fe03c, #5fe03c) 0 0 / 4px 1px no-repeat,
      linear-gradient(#5fe03c, #5fe03c) 100% 0 / 4px 1px no-repeat,
      linear-gradient(#5fe03c, #5fe03c) 0 100% / 4px 1px no-repeat,
      linear-gradient(#5fe03c, #5fe03c) 100% 100% / 4px 1px no-repeat;
  }

  /* Drop-downs */
  .drop {
    display: inline-flex;
    align-items: center;
    flex: none;
    box-sizing: border-box;
    padding-right: 8px;
    background: #5f5f5f;
    border-radius: 2px;
  }

  .drop select {
    appearance: none;
    flex: 1;
    height: 25px;
    padding-left: 6px;
  }

  .drop--work {
    width: 193px;
    margin: 0 2px 0 6px;
  }

  .drop--mode {
    width: 123px;
  }

  .drop--tone {
    width: 266px;
  }

  .drop--tone select {
    height: 22px;
    padding-left: 6px;
  }

  .drop--fps {
    width: 122px;
    margin: 0 9px 0 8px;
  }

  .flat {
    width: 124px;
    height: 26px;
    text-align: left;
    border: 1px solid #525252;
    background: #474747;
    flex: none;
  }

  .mini {
    display: flex;
    justify-content: center;
    width: 12px;
    flex: none;
    opacity: 0.7;
  }

  .mini .caret {
    width: 8px;
  }

  .mini--wide {
    width: 24px;
  }

  .mini--dim {
    width: 30px;
    opacity: 0.5;
  }

  /* Title bar */
  .titlebar {
    display: flex;
    align-items: center;
    flex: none;
    height: 23px;
    padding-right: 3px;
    background: #fff;
    color: #111;
    font-family: Roboto, sans-serif;
    font-size: 13px;
  }

  .titlebar svg {
    display: block;
    margin: 0 auto;
    fill: none;
    stroke: #111;
  }

  .titlebar button {
    width: 46px;
  }

  .logo-s {
    width: 14px;
    height: 16px;
    margin: 0 6px 0 4px;
    background: #2c93b0;
    color: #fff;
    font-size: 10px;
    line-height: 14px;
    font-weight: 700;
    text-align: center;
  }

  .title {
    flex: 1;
  }

  /* Menu bar */
  .menubar {
    display: flex;
    align-items: center;
    flex: none;
    height: 37px;
    padding: 0 3px 0 11px;
  }

  .menubar .menus {
    flex: 1;
    margin-left: 13px;
  }

  /* Status line */
  .status {
    display: flex;
    align-items: center;
    flex: none;
    height: 34px;
    padding-right: 3px;
    border-bottom: 5px solid #424242;
  }

  .gridicon {
    width: 42px;
    display: flex;
    justify-content: center;
  }

  .coord {
    display: flex;
    align-items: center;
    justify-content: space-between;
    width: 65px;
  }

  .coord input {
    width: 48px;
    height: 26px;
  }

  .login {
    display: flex;
    align-items: center;
    gap: 6px;
    width: 121px;
    height: 24px;
    margin-bottom: 5px;
    padding: 0 4px;
    border-radius: 2px;
    background: #5d5d5d;
    color: #eee;
    font-size: 13px;
  }

  .login span {
    flex: 1;
    text-align: left;
  }

  /* Shelf */
  .shelf {
    display: flex;
    flex: none;
    height: 80px;
    border-bottom: 4px solid #424242;
  }

  .shelf .grip {
    margin-right: 7px;
  }

  .shelf-side {
    display: flex;
    flex-direction: column;
    align-items: center;
    gap: 34px;
    flex: none;
    width: 29px;
    padding-top: 16px;
    box-sizing: border-box;
    background: #404040;
  }

  .shelf-side i {
    width: 13px;
    height: 5px;
    background: #8a8a8a;
  }

  .shelf-main {
    flex: 1;
    min-width: 0;
  }

  .shelf-tabs {
    display: flex;
    gap: 1px;
    height: 22px;
    padding-left: 2px;
    background: #414141;
  }

  .shelf-tabs button {
    padding: 0 12px;
    color: #b9b9b9;
  }

  .shelf-tabs .on {
    background: #4b4b4b;
  }

  .shelf-icons {
    display: flex;
    align-items: center;
    height: 52px;
    padding: 0 3px 0 6px;
  }

  .shelf-icons .slot {
    width: 43px;
    height: 42px;
  }

  .shelf-icons .sep {
    width: 40px;
    height: 40px;
  }

  .shelf-icons .sep::before {
    width: 2px;
    background: #b5b5b5;
  }

  .shelf-icons .named {
    flex-direction: column;
    color: #fff;
    font-size: 14px;
    line-height: 16px;
  }

  .named span {
    max-width: 41px;
    background: #333;
    overflow: hidden;
  }

  .shelf-scroll {
    display: flex;
    flex-direction: column;
    align-items: center;
    gap: 4px;
    width: 16px;
    padding: 4px 0;
    margin-left: auto;
    background: #3e3e3e;
  }

  .shelf-scroll i {
    width: 13px;
    height: 13px;
    border-radius: 50%;
    background: #5e5e5e;
  }

  /* Working area */
  .work {
    display: flex;
    flex: 1;
    min-height: 0;
  }

  .toolbox {
    display: flex;
    flex-direction: column;
    align-items: center;
    flex: none;
    width: 54px;
    margin-right: 4px;
  }

  .grip-h {
    width: 50px;
    height: 6px;
    margin: 2px 0 4px;
    background: radial-gradient(circle at 1px 1px, #858585 1px, transparent 1px) 0 0 / 3px 3px;
  }

  .tool {
    display: flex;
    align-items: center;
    justify-content: center;
    flex: none;
    width: 46px;
    height: 47px;
  }

  .tool--last {
    margin-top: 46px;
  }

  .toolbox hr {
    width: 46px;
    height: 2px;
    margin: 6px 0;
    border: 0;
    background: #a5a5a5;
  }

  .maya {
    display: flex;
    flex-direction: column;
    width: 35px;
    height: 40px;
    margin: auto 0 7px;
    background: linear-gradient(#3fa9c4 68%, #24607c 68%);
    color: #fff;
    border-radius: 3px;
    text-align: center;
    font-weight: 700;
  }

  .maya b {
    font-size: 20px;
    line-height: 28px;
  }

  .maya small {
    font-size: 8px;
    line-height: 11px;
  }

  .tabstrip {
    display: flex;
    flex: none;
    height: 23px;
    background: #414141;
  }

  .tabstrip button {
    padding: 0 8px;
    color: #9a9a9a;
  }

  .tabstrip .on {
    background: #4b4b4b;
    color: #cacaca;
  }

  .tabstrip .bright {
    margin-right: 8px;
    color: #fff;
  }

  .outliner {
    display: flex;
    flex-direction: column;
    flex: none;
    width: 332px;
    margin-right: 5px;
    padding-bottom: 12px;
  }

  .outliner .tabstrip button {
    padding: 0 9px;
  }

  .outliner .menus {
    padding: 4px 9px 6px;
  }

  .search {
    display: flex;
    align-items: center;
    gap: 12px;
    flex: none;
    height: 24px;
    padding: 0 6px 4px 4px;
  }

  .search-box {
    display: flex;
    align-items: center;
    flex: 1;
    padding-right: 4px;
    background: #343434;
    height: 24px;
  }

  .search-box input {
    flex: 1;
    padding-left: 2px;
  }

  .search-box input::placeholder {
    color: #8a8a8a;
  }

  .tree-wrap {
    display: flex;
    flex: 1;
    min-height: 0;
    background: #414141;
  }

  .tree {
    flex: 1;
    margin: 0;
    padding: 0;
    list-style: none;
    font-family: 'Open Sans', sans-serif;
    font-size: 16px;
    color: #dadada;
  }

  .tree li {
    position: relative;
    display: flex;
    align-items: center;
    gap: 4px;
    height: 26px;
    padding-left: 26px;
  }

  .tree .exp {
    width: 15px;
    height: 15px;
  }

  .exp svg {
    display: block;
    fill: none;
    stroke: #aaa;
  }

  .tree .dim {
    color: #6f6f6f;
  }

  .tree .sel {
    background: #4c5763;
  }

  .tree .child {
    padding-left: 42px;
  }

  /* Branch lines; the first child's stops under the parent's toggle */
  .child::before {
    content: '';
    position: absolute;
    left: 32px;
    top: -5px;
    width: 14px;
    height: 17px;
    border: solid #999;
    border-width: 0 0 1px 1px;
  }

  .child::after {
    content: '';
    position: absolute;
    left: 44px;
    top: 10px;
    width: 5px;
    height: 5px;
    border-radius: 50%;
    background: #999;
  }

  .child + .child::before {
    top: -14px;
    height: 26px;
  }

  .vscroll {
    display: flex;
    flex-direction: column;
    align-items: center;
    flex: none;
    width: 14px;
    padding: 4px 5px 4px 1px;
  }

  .vtrack {
    flex: 1;
    width: 14px;
    padding: 3px 0;
  }

  .vthumb {
    height: 100%;
    border-radius: 6px;
    background: #646464;
  }

  .vthumb--short {
    height: 51%;
  }

  .hscroll {
    display: flex;
    align-items: center;
    gap: 6px;
    flex: none;
    height: 16px;
    padding: 0 20px 0 6px;
    background: #414141;
    fill: #cacaca;
  }

  .htrack {
    flex: 1;
  }

  .hthumb {
    width: 72%;
    height: 14px;
    border-radius: 6px;
    background: #646464;
  }

  .hthumb--full {
    width: 100%;
  }

  /* Viewport */
  .viewport {
    display: flex;
    flex-direction: column;
    flex: 1;
    min-width: 0;
    margin: 1px 0 4px;
    border: 1px solid #858585;
  }

  .viewport > .menus {
    padding: 3px 8px 3px;
  }

  .viewbar {
    display: flex;
    align-items: center;
    flex: none;
    height: 23px;
    padding-bottom: 2px;
  }

  .viewbar .slot {
    width: 23px;
    height: 21px;
  }

  .viewbar .sep {
    width: 13px;
    height: 20px;
  }

  .viewbar input {
    width: 46px;
    height: 21px;
    padding-left: 4px;
    margin: 0 4px 0 2px;
  }

  .canvas {
    position: relative;
    flex: 1;
    min-height: 0;
    overflow: hidden;
    background: linear-gradient(#8d9db5, #8092a3 18%, #697886 31%, #586571 44%, #505a66 53%, #434954 62%, #363a40 72%, #292b2e 82%, #1a1b1c);
  }

  .scene {
    display: block;
    position: absolute;
    width: 100%;
    height: 100%;
  }

  .edge {
    fill: none;
    stroke: #74d4d8;
    stroke-width: 1.5;
  }

  .cube-text {
    fill: #5c636b;
    font-size: 34px;
    text-anchor: middle;
  }

  .axis-text {
    fill: #2ee82e;
    font-size: 14px;
    font-weight: 700;
  }

  .hud {
    position: absolute;
    left: 19px;
    top: -4px;
    color: #f2f2f2;
    font-family: 'Liberation Sans', 'Noto Sans CJK SC', sans-serif;
    font-size: 12px;
    font-weight: 700;
  }

  .hud-row {
    display: grid;
    grid-template-columns: 70px 64px 84px 84px;
    height: 26px;
  }

  .hud-row--wide {
    grid-template-columns: 110px 94px 81px 82px;
  }

  .hud-row--wide:last-child {
    grid-template-columns: 100px 94px 84px 78px;
  }

  .hud-row span:not(:first-child) {
    text-align: right;
  }

  .cam-name {
    position: absolute;
    left: 0;
    right: 44px;
    bottom: 8px;
    text-align: center;
    color: #fff;
    font-family: 'Liberation Sans', 'Noto Sans CJK SC', sans-serif;
    font-size: 12px;
    font-weight: 700;
  }

  /* Channel box */
  .channels {
    display: flex;
    flex-direction: column;
    flex: none;
    width: 325px;
    padding: 0 5px 9px 8px;
  }

  .chan-tools {
    display: flex;
    justify-content: flex-end;
    align-items: center;
    gap: 5px;
    flex: none;
    height: 26px;
    padding-right: 1px;
  }

  .channels .menus {
    padding: 3px 8px 4px;
  }

  .chan-body {
    display: flex;
    flex: none;
    height: 456px;
    overflow: hidden;
  }

  .chan-list {
    flex: 1;
    padding: 4px 5px;
    font-family: 'Open Sans', 'Noto Sans CJK SC', sans-serif;
    font-size: 14px;
    font-weight: 700;
    overflow: hidden;
  }

  .chan-list p {
    margin: 0;
  }

  .chan-list .in {
    padding-left: 12px;
  }

  .vscroll--chan {
    background: #414141;
    width: 14px;
    padding: 8px 1px 2px;
  }

  .dots {
    align-self: center;
    flex: none;
    width: 112px;
    height: 3px;
    margin: 6px 0 11px;
    background: radial-gradient(circle at 1px 1px, #8a8a8a 1px, transparent 1px) 0 0 / 6px 3px;
  }

  .layer-panel {
    display: flex;
    flex-direction: column;
    flex: 1;
    margin-left: 3px;
  }

  .layer-tools {
    display: flex;
    justify-content: flex-end;
    gap: 13px;
    flex: none;
    height: 34px;
    padding-right: 8px;
  }

  .layers {
    display: flex;
    flex-direction: column;
    flex: 1;
    margin: 0 3px 0 2px;
    background: #373737;
  }

  .layers .hscroll {
    padding: 0 6px;
  }

  .layer {
    display: flex;
    align-items: center;
    height: 26px;
    padding-left: 3px;
    color: #fff;
  }

  .layer b {
    box-sizing: border-box;
    width: 26px;
    height: 20px;
    margin-right: 3px;
    border-radius: 2px;
    font-weight: 400;
    line-height: 20px;
    text-align: center;
  }

  .layer span {
    margin-left: 4px;
  }

  .layer.on {
    background: #5e90ab;
    color: #12384e;
  }

  .layer.on b {
    border: 1px solid #41718c;
    line-height: 18px;
  }

  .sidetabs {
    display: flex;
    flex-direction: column;
    flex: none;
    width: 24px;
    background: #464646;
  }

  .sidetabs button {
    padding: 12px 0;
    border-bottom: 1px solid #3c3c3c;
    writing-mode: vertical-rl;
    text-orientation: sideways;
    text-align: left;
    line-height: 24px;
    color: #9c9c9c;
  }

  .sidetabs .on {
    background: #4b4b4b;
    color: #fff;
  }

  /* Time slider */
  .timeline {
    display: flex;
    flex: none;
    height: 43px;
    padding: 3px 12px 3px 0;
    border-top: 2px solid #424242;
  }

  .timeline .grip {
    margin-right: 10px;
  }

  .ruler {
    display: flex;
    flex: 1;
    min-width: 0;
    padding-left: 9px;
    background: #363636;
    overflow: hidden;
  }

  .now {
    display: flex;
    align-items: flex-end;
    justify-content: flex-end;
    flex: none;
    box-sizing: border-box;
    width: 17px;
    padding: 0 4px 6px 0;
    background: #555;
    color: #fff;
  }

  .ticks {
    display: flex;
    flex: 1;
    margin-right: -20px;
  }

  /* Labels run past their cell, so the cell must not grow with them */
  .tick {
    box-sizing: border-box;
    flex: 1 1 0;
    width: 0;
    min-width: 0;
    padding-left: 3px;
    color: #848484;
    line-height: 18px;
    background: linear-gradient(#8f8f8f, #8f8f8f) 0 20px / 2px 18px no-repeat;
  }

  .frame {
    flex: none;
    width: 110px;
    height: 24px;
    margin: 7px 9px 0;
  }

  .play {
    display: flex;
    flex: none;
    height: 34px;
    align-items: center;
  }

  .play button {
    width: 29px;
    display: flex;
    justify-content: center;
  }

  /* Range slider */
  .range {
    display: flex;
    align-items: center;
    flex: none;
    height: 42px;
    padding-right: 10px;
    border-top: 3px solid #424242;
    box-sizing: border-box;
  }

  .range input {
    flex: none;
    width: 110px;
    height: 31px;
    margin-right: 10px;
  }

  .range .last {
    margin-right: 0;
  }

  .range .grip {
    margin-right: 10px;
  }

  .slider {
    flex: 1;
    height: 31px;
    margin: 0 10px 0 -3px;
    padding: 3px 0 3px 38px;
    box-sizing: border-box;
    background: #414141;
  }

  .slider-bar {
    display: flex;
    align-items: center;
    gap: 6px;
    box-sizing: border-box;
    width: 62%;
    height: 25px;
    padding: 0 5px;
    border-radius: 2px;
    background: #646464;
  }

  .slider-bar i {
    width: 17px;
    height: 16px;
    border-radius: 3px;
    background: #a0a0a0;
  }

  .slider-bar .end {
    margin-left: auto;
  }

  .sep--thin {
    width: 18px;
  }

  .range .slot {
    width: 37px;
  }

  .range .slot.active {
    width: 30px;
    height: 30px;
    margin: 0 3px;
  }

  .range .flat {
    width: 130px;
    height: 31px;
    padding-left: 3px;
  }

  /* Command line */
  .command {
    display: flex;
    align-items: center;
    flex: none;
    height: 43px;
    padding-right: 9px;
    border-top: 3px solid #424242;
    box-sizing: border-box;
  }

  .help {
    width: 1014px;
    flex: none;
    overflow: hidden;
    white-space: nowrap;
    color: #eee;
    font-family: 'Open Sans', 'Noto Sans CJK SC', sans-serif;
    font-size: 13px;
    margin: 0 6px 0 9px;
  }

  .command label {
    width: 54px;
    padding-left: 8px;
    box-sizing: border-box;
  }

  .command input {
    width: 435px;
    height: 31px;
  }

  .split {
    width: 3px;
    height: 12px;
    margin: 0 4px 0 3px;
    background: radial-gradient(circle at 1px 1px, #8a8a8a 1px, transparent 1px) 0 0 / 3px 5px;
  }

  .command output {
    flex: 1;
    height: 28px;
    margin-right: 7px;
    background: #373737;
  }

  /* Pressed-keys overlay */
  .keys {
    position: absolute;
    left: 126px;
    bottom: 125px;
    display: flex;
    align-items: center;
    justify-content: space-between;
    box-sizing: border-box;
    width: 142px;
    height: 70px;
    padding: 0 10px;
    border-radius: 14px;
    background: #171717;
  }

  .keys span {
    color: #000;
  }

  .keys kbd {
    display: flex;
    flex-direction: column;
    align-items: center;
    justify-content: center;
    width: 57px;
    height: 45px;
    border-radius: 9px;
    background: #f08f1e;
    color: #241400;
    font-family: 'Open Sans', sans-serif;
    font-size: 20px;
  }

  .keys .small {
    width: 45px;
    gap: 4px;
    font-size: 10px;
    line-height: 12px;
  }

  .keys svg {
    fill: none;
    stroke: #241400;
  }

  /* Watermark */
  .watermark {
    position: fixed;
    left: 12px;
    bottom: 10px;
    display: flex;
    align-items: center;
    gap: 9px;
    color: #bdbdbd;
    fill: #bdbdbd;
    opacity: 0.35;
    font-family: 'Open Sans', sans-serif;
    font-size: 50px;
    font-weight: 700;
    line-height: 54px;
  }
</style>
